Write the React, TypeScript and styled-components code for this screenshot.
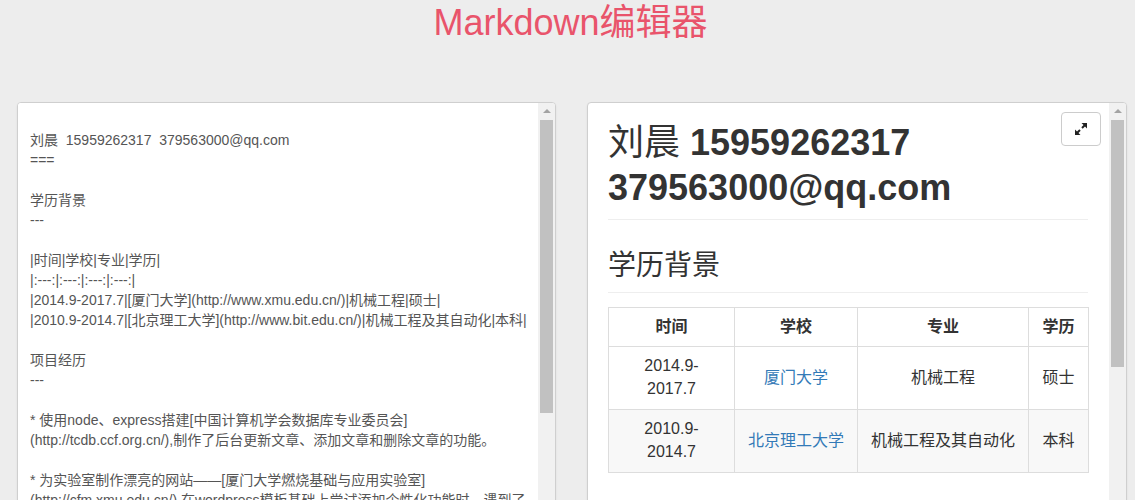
import React from "react";
import styled, { createGlobalStyle } from "styled-components";

const GlobalStyle = createGlobalStyle`
  html, body {
    margin: 0;
    height: 100%;
    overflow: hidden;
  }
  body {
    background: #ededed;
    font-family: "Liberation Sans", Arial, "Noto Sans CJK SC", sans-serif;
  }
`;

const Header = styled.header`
  padding-left: 6px;
  text-align: center;
`;

const Title = styled.h1`
  margin: 3px 0 59px;
  font-size: 36px;
  line-height: 39.6px;
  font-weight: 400;
  color: #e9546b;
`;

const Workspace = styled.main`
  display: grid;
  grid-template-columns: 539px 540px;
  column-gap: 31px;
  padding: 0 8px 0 17px;
  height: 420px;
`;

const Panel = styled.section`
  display: flex;
  background: #fff;
  border: 1px solid #cfcfcf;
  border-radius: 4px;
  box-shadow: 0 1px 2px rgba(0, 0, 0, 0.08);
  overflow: hidden;
`;

const Editor = styled.textarea`
  flex: 1;
  min-width: 0;
  margin: 0;
  border: none;
  outline: none;
  resize: none;
  overflow: hidden;
  padding: 27px 12px 0 12px;
  font-family: "Liberation Sans", Arial, "Noto Sans CJK SC", sans-serif;
  font-size: 14px;
  line-height: 20px;
  color: #555;
  white-space: pre;
  background: #fff;
`;

const Scrollbar = styled.div`
  flex: 0 0 17px;
  display: flex;
  flex-direction: column;
  background: #f1f1f1;
`;

const ScrollArrow = styled.div`
  height: 17px;
  display: flex;
  align-items: center;
  justify-content: center;
  &::before {
    content: "";
    width: 0;
    height: 0;
    border-left: 4px solid transparent;
    border-right: 4px solid transparent;
    border-bottom: 4px solid #a3a3a3;
  }
`;

const Thumb = styled.div<{ $size: number }>`
  height: ${(p) => p.$size}px;
  margin: 0 2px;
  background: #c1c1c1;
`;

const Preview = styled.article`
  flex: 1;
  min-width: 0;
  position: relative;
  padding: 0 21px 0 20px;
  color: #333;
  font-size: 16px;
  line-height: 1.42857;
`;

const ExpandButton = styled.button`
  position: absolute;
  top: 9px;
  right: 8px;
  width: 40px;
  height: 34px;
  padding: 0;
  display: flex;
  align-items: center;
  justify-content: center;
  background: #fff;
  border: 1px solid #ccc;
  border-radius: 4px;
  cursor: pointer;
`;

const Heading1 = styled.h1`
  margin: 17px 0 0;
  padding-bottom: 9px;
  border-bottom: 1px solid #eee;
  font-size: 36px;
  line-height: 45px;
  font-weight: 700;
`;

const Plain = styled.span`
  font-weight: 400;
`;

const Heading2 = styled.h2`
  margin: 28px 0 14px;
  padding-bottom: 9px;
  border-bottom: 1px solid #eee;
  font-size: 28px;
  line-height: 35px;
  font-weight: 400;
`;

const Table = styled.table`
  width: 100%;
  table-layout: fixed;
  border-collapse: collapse;
  border-spacing: 0;

  th,
  td {
    border: 1px solid #ddd;
    padding: 8px;
    text-align: center;
    vertical-align: middle;
  }
  th {
    font-weight: 700;
  }
  tbody tr:nth-child(2n) {
    background: #f8f8f8;
  }
`;

const Link = styled.a`
  color: #337ab7;
  text-decoration: none;
`;

const ExpandIcon = () => (
  <svg width="14" height="14" viewBox="0 0 14 14" aria-hidden="true">
    <polygon points="7.5,1 13,1 13,6.5" fill="#222" />
    <line x1="11" y1="3" x2="8" y2="6" stroke="#222" strokeWidth="2" />
    <polygon points="1,7.5 1,13 6.5,13" fill="#222" />
    <line x1="3" y1="11" x2="6" y2="8" stroke="#222" strokeWidth="2" />
  </svg>
);

const source = [
  "刘晨  15959262317  379563000@qq.com",
  "===",
  "",
  "学历背景",
  "---",
  "",
  "|时间|学校|专业|学历|",
  "|:---:|:---:|:---:|:---:|",
  "|2014.9-2017.7|[厦门大学](http://www.xmu.edu.cn/)|机械工程|硕士|",
  "|2010.9-2014.7|[北京理工大学](http://www.bit.edu.cn/)|机械工程及其自动化|本科|",
  "",
  "项目经历",
  "---",
  "",
  "* 使用node、express搭建[中国计算机学会数据库专业委员会]",
  "(http://tcdb.ccf.org.cn/),制作了后台更新文章、添加文章和删除文章的功能。",
  "",
  "* 为实验室制作漂亮的网站——[厦门大学燃烧基础与应用实验室]",
  "(http://cfm.xmu.edu.cn/),在wordpress模板基础上尝试添加个性化功能时，遇到了",
].join("\n");

const rows = [
  { time: ["2014.9-", "2017.7"], school: "厦门大学", url: "http://www.xmu.edu.cn/", major: "机械工程", degree: "硕士" },
  { time: ["2010.9-", "2014.7"], school: "北京理工大学", url: "http://www.bit.edu.cn/", major: "机械工程及其自动化", degree: "本科" },
];

export default function App() {
  return (
    <>
      <GlobalStyle />
      <Header>
        <Title>Markdown编辑器</Title>
      </Header>
      <Workspace>
        <Panel>
          <Editor readOnly value={source} spellCheck={false} />
          <Scrollbar>
            <ScrollArrow />
            <Thumb $size={293} />
          </Scrollbar>
        </Panel>
        <Panel>
          <Preview>
            <ExpandButton aria-label="全屏">
              <ExpandIcon />
            </ExpandButton>
            <Heading1>
              <Plain>刘晨</Plain> 15959262317 379563000@qq.com
            </Heading1>
            <Heading2>学历背景</Heading2>
            <Table>
              <colgroup>
                <col style={{ width: 126 }} />
                <col style={{ width: 123 }} />
                <col style={{ width: 171 }} />
                <col style={{ width: 60 }} />
              </colgroup>
              <thead>
                <tr>
                  <th>时间</th>
                  <th>学校</th>
                  <th>专业</th>
                  <th>学历</th>
                </tr>
              </thead>
              <tbody>
                {rows.map((r) => (
                  <tr key={r.school}>
                    <td>
                      {r.time[0]}
                      <br />
                      {r.time[1]}
                    </td>
                    <td>
                      <Link href={r.url}>{r.school}</Link>
                    </td>
                    <td>{r.major}</td>
                    <td>{r.degree}</td>
                  </tr>
                ))}
              </tbody>
            </Table>
          </Preview>
          <Scrollbar>
            <ScrollArrow />
            <Thumb $size={247} />
          </Scrollbar>
        </Panel>
      </Workspace>
    </>
  );
}
